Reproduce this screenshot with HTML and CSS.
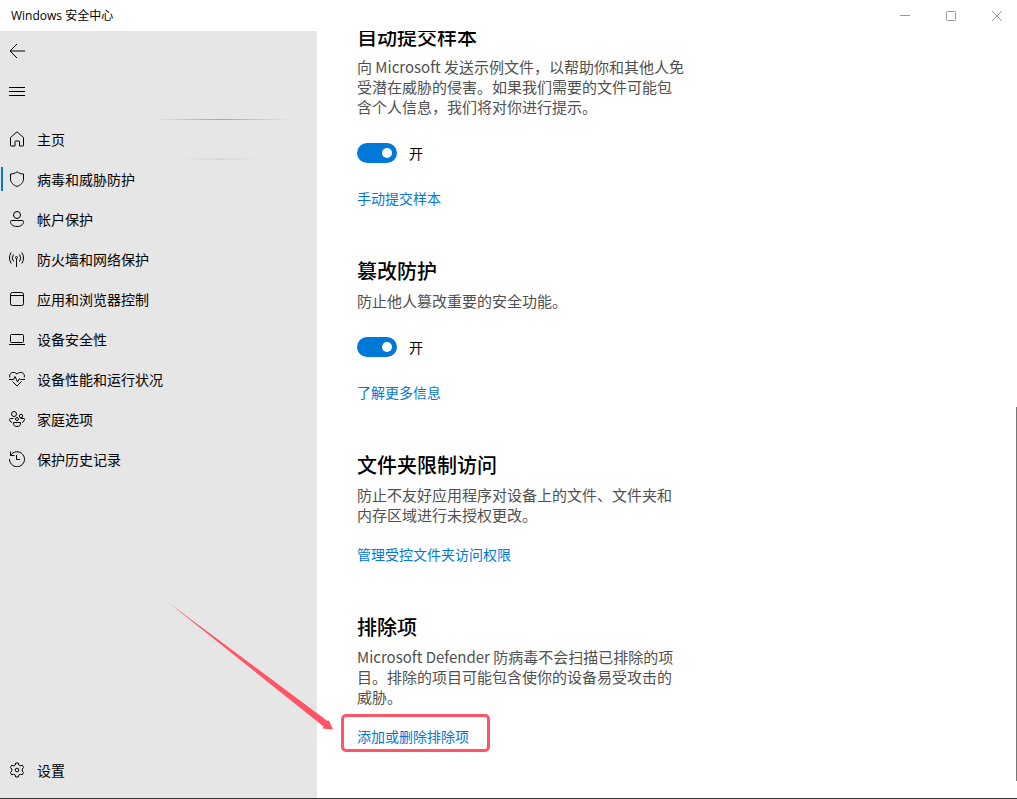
FILE: index.html
```html
<!DOCTYPE html>
<html lang="zh-CN">

<head>
    <meta charset="UTF-8">
    <meta name="viewport" content="width=device-width, initial-scale=1.0">
    <title>Windows 安全中心</title>
    <link rel="stylesheet" href="styles.css">
</head>

<body>
    <div class="window">
        <header class="title-bar">
            <span class="title">Windows 安全中心</span>
            <div class="window-buttons">
                <button class="window-button" aria-label="最小化">
                    <svg class="window-icon" viewBox="0 0 12 12"><path d="M1 5.5h10"/></svg>
                </button>
                <button class="window-button" aria-label="最大化">
                    <svg class="window-icon" viewBox="0 0 12 12"><rect x="1.5" y="1.5" width="9" height="9" rx="1"/></svg>
                </button>
                <button class="window-button" aria-label="关闭">
                    <svg class="window-icon" viewBox="0 0 12 12"><path d="M1 1l10 10M11 1L1 11"/></svg>
                </button>
            </div>
        </header>

        <div class="window-body">
            <aside class="sidebar">
                <button class="nav-item" aria-label="后退">
                    <svg class="icon" viewBox="0 0 16 16"><path d="M16 8H1M8 1L1 8l7 7"/></svg>
                </button>
                <button class="nav-item" aria-label="菜单">
                    <svg class="icon" viewBox="0 0 16 16"><path d="M0 4.5h16M0 8.5h16M0 12.5h16"/></svg>
                </button>

                <nav class="nav">
                    <a href="#" class="nav-item">
                        <svg class="icon" viewBox="0 0 16 16"><path d="M1.5 6.5L8 .8l6.5 5.700V14.500q0 .5-.5.5H10.500V10.500q0-.5-.5-.5H6.500q-.5 0-.5.5V15H2q-.5 0-.5-.5z"/></svg>
                        主页
                    </a>
                    <a href="#" class="nav-item active">
                        <svg class="icon" viewBox="0 0 16 16"><path d="M8 .8C10 2.300 12 3 14.500 3v5c0 3.500-2.500 6-6.500 7.400C4 14 1.500 11.500 1.500 8V3C4 3 6 2.300 8 .8z"/></svg>
                        病毒和威胁防护
                    </a>
                    <a href="#" class="nav-item">
                        <svg class="icon" viewBox="0 0 16 16"><circle cx="8" cy="4" r="3.500"/><path d="M2.500 9.500h11q1 0 1 1c0 3-2.500 5-6.500 5s-6.500-2-6.500-5q0-1 1-1z"/></svg>
                        帐户保护
                    </a>
                    <a href="#" class="nav-item">
                        <svg class="icon" viewBox="0 0 16 16"><path d="M7.500 7v9M4.500 3.500q-2.500 3.500 0 7M10.500 3.500q2.500 3.500 0 7M2.200 1.500q-3.500 5.500 0 11M12.800 1.500q3.500 5.500 0 11"/><circle cx="7.500" cy="6.500" r="1"/></svg>
                        防火墙和网络保护
                    </a>
                    <a href="#" class="nav-item">
                        <svg class="icon" viewBox="0 0 16 16"><rect x="1.500" y="1.500" width="13" height="13" rx="2"/><path d="M1.500 4.500h13"/></svg>
                        应用和浏览器控制
                    </a>
                    <a href="#" class="nav-item">
                        <svg class="icon" viewBox="0 0 16 16"><rect x="1.500" y="3.500" width="13" height="8" rx="1"/><path d="M0 13.500h16"/></svg>
                        设备安全性
                    </a>
                    <a href="#" class="nav-item">
                        <svg class="icon" viewBox="0 0 16 16"><path d="M.8 6.500C-.5 2 4.500-.5 8 3c3.500-3.500 8.500-1 7.200 3.500M0 8.500h4.500l1.500-3 2.500 5.500 2-3.500.8 1H16M3.500 10.500L8 15l4.500-4.500"/></svg>
                        设备性能和运行状况
                    </a>
                    <a href="#" class="nav-item">
                        <svg class="icon" viewBox="0 0 16 16"><circle cx="5" cy="3" r="2.500"/><circle cx="12" cy="5" r="1.700"/><circle cx="8" cy="8" r="1.500"/><path d="M4.500 7.500H1.500Q.5 7.500.5 8.500 .8 11 3 11.500M11.500 7.500h3.500q.7 0 .5 1-.5 2.500-2.500 3M4.500 11.500h7q.5 4-3.500 4t-3.500-4z"/></svg>
                        家庭选项
                    </a>
                    <a href="#" class="nav-item">
                        <svg class="icon" viewBox="0 0 16 16"><path d="M1.500.5v4h4M1.500 4.500A7.500 7.500 0 1 1 .5 8M7.500 4v4.500H11"/></svg>
                        保护历史记录
                    </a>
                </nav>

                <a href="#" class="nav-item settings">
                    <svg class="icon" viewBox="0 0 16 16"><path d="M6.700 1h2.600l.5 2 1.500.8 2-.6 1.300 2.300L13.200 7v2l1.400 1.500-1.300 2.300-2-.6-1.500.8-.5 2H6.700l-.5-2-1.500-.8-2 .6-1.300-2.300L2.800 9V7L1.400 5.500l1.300-2.300 2 .6L6.200 3z"/><circle cx="8" cy="8" r="1.800"/></svg>
                    设置
                </a>
            </aside>

            <main class="content">
                <section class="section">
                    <h2 class="heading">自动提交样本</h2>
                    <p class="text">向 Microsoft 发送示例文件，以帮助你和其他人免受潜在威胁的侵害。如果我们需要的文件可能包含个人信息，我们将对你进行提示。</p>
                    <label class="toggle">
                        <input type="checkbox" class="toggle-input" checked>
                        开
                    </label>
                    <a href="#" class="link">手动提交样本</a>
                </section>

                <section class="section">
                    <h2 class="heading">篡改防护</h2>
                    <p class="text">防止他人篡改重要的安全功能。</p>
                    <label class="toggle">
                        <input type="checkbox" class="toggle-input" checked>
                        开
                    </label>
                    <a href="#" class="link">了解更多信息</a>
                </section>

                <section class="section">
                    <h2 class="heading">文件夹限制访问</h2>
                    <p class="text">防止不友好应用程序对设备上的文件、文件夹和内存区域进行未授权更改。</p>
                    <a href="#" class="link">管理受控文件夹访问权限</a>
                </section>

                <section class="section">
                    <h2 class="heading">排除项</h2>
                    <p class="text">Microsoft Defender 防病毒不会扫描已排除的项目。排除的项目可能包含使你的设备易受攻击的威胁。</p>
                    <a href="#" class="link marked">
                        添加或删除排除项
                        <svg class="arrow" viewBox="0 0 166 128"><path d="M1 0L159.500 118l1.500-.5 4 9-10.500-1 1-2z"/></svg>
                    </a>
                </section>

                <div class="scroll-thumb"></div>
            </main>
        </div>
    </div>
</body>

</html>
```

FILE: styles.css
```css
* {
    box-sizing: border-box;
}

body {
    margin: 0;
    background-color: #ffffff;
    color: #000000;
    font-family: "Noto Sans CJK SC", sans-serif;
    font-size: 14px;
    line-height: 20px;
}

button {
    border: none;
    background-color: transparent;
    font: inherit;
    color: inherit;
}

a {
    text-decoration: none;
    color: inherit;
}

.window {
    display: flex;
    flex-direction: column;
    height: 100vh;
    overflow: hidden;
    border-bottom: 1px solid #333333;
}

/* Title bar */
.title-bar {
    display: flex;
    justify-content: space-between;
    align-items: center;
    height: 31px;
    flex-shrink: 0;
    padding-left: 11px;
}

.title {
    font-family: "Open Sans", "Noto Sans CJK SC", sans-serif;
    font-size: 12px;
}

.window-buttons {
    display: flex;
    gap: 6px;
}

.window-button {
    display: flex;
    justify-content: center;
    align-items: center;
    width: 40px;
    height: 30px;
    padding: 0;
}

.window-icon {
    width: 12px;
    height: 12px;
    fill: none;
    stroke: #999999;
}

.window-body {
    display: flex;
    flex: 1;
    min-height: 0;
    overflow: hidden;
}

/* Sidebar */
.sidebar {
    position: relative;
    display: flex;
    flex-direction: column;
    width: 317px;
    flex-shrink: 0;
    padding-bottom: 8px;
    background-color: #e6e6e6;
}

/* Faint light streaks behind the menu */
.sidebar::before,
.sidebar::after {
    content: "";
    position: absolute;
    height: 1px;
    background: linear-gradient(to right, transparent, #a6a6a6, transparent);
}

.sidebar::before {
    top: 88px;
    left: 152px;
    width: 138px;
}

.sidebar::after {
    top: 127px;
    left: 180px;
    width: 80px;
    height: 2px;
    opacity: 0.2;
}

.nav {
    margin-top: 8px;
}

.nav-item {
    position: relative;
    display: flex;
    align-items: center;
    gap: 12px;
    height: 40px;
    padding: 0 9px;
}

.active::before {
    content: "";
    position: absolute;
    left: 1px;
    width: 2px;
    height: 24px;
    background-color: #0078d7;
}

.settings {
    margin-top: auto;
}

.icon {
    width: 16px;
    height: 16px;
    flex-shrink: 0;
    fill: none;
    stroke: #000000;
    stroke-linejoin: round;
}

/* Content is scrolled to its end */
.content {
    position: relative;
    display: flex;
    flex-direction: column;
    justify-content: flex-end;
    gap: 49px;
    flex: 1;
    padding: 0 40px 52px;
}

.section {
    display: flex;
    flex-direction: column;
    align-items: flex-start;
}

.heading {
    margin: 0 0 6px;
    font-size: 20px;
    line-height: 28px;
    font-weight: 500;
}

.text {
    max-width: 328px;
    margin: 0;
    font-size: 15px;
    color: #505050;
}

.toggle {
    display: flex;
    align-items: center;
    gap: 12px;
    margin: 26px 0 6px;
}

.toggle-input {
    appearance: none;
    display: flex;
    align-items: center;
    justify-content: flex-end;
    width: 40px;
    height: 20px;
    margin: 0;
    padding: 5px;
    border-radius: 10px;
    background-color: #0078d7;
}

.toggle-input::before {
    content: "";
    width: 10px;
    height: 10px;
    border-radius: 50%;
    background-color: #ffffff;
}

.link {
    position: relative;
    margin-top: 19px;
    color: #0078d7;
}

/* Red frame and arrow that point out the link */
.marked::before {
    content: "";
    position: absolute;
    top: -12px;
    bottom: -6px;
    left: -16px;
    right: -21px;
    border: 3px solid #ff5565;
    border-radius: 5px;
}

.arrow {
    position: absolute;
    right: calc(100% + 23px);
    bottom: 15px;
    width: 166px;
    height: 128px;
    fill: #ff5565;
}

.scroll-thumb {
    position: absolute;
    top: 49%;
    right: 0;
    bottom: 17px;
    width: 1px;
    background-color: #777777;
}
```
